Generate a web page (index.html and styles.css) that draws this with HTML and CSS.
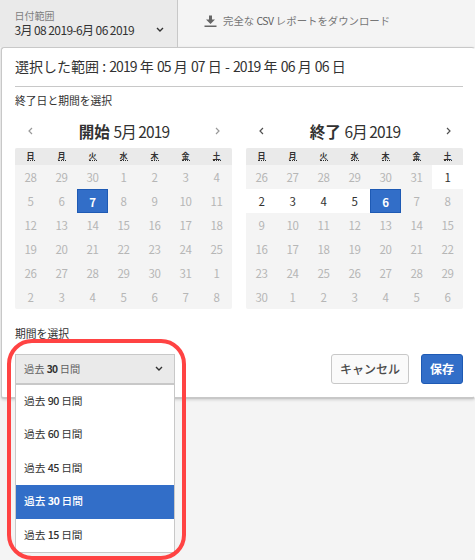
FILE: index.html
```html
<!DOCTYPE html>
<html lang="ja">
<head>
<meta charset="utf-8">
<title>日付範囲</title>
<link rel="stylesheet" href="styles.css">
</head>
<body>
<header class="toolbar">
  <div class="range-button">
    <div>
      <div class="range-label">日付範囲</div>
      <div class="range-value">3月 08 2019-6月 06 2019</div>
    </div>
    <svg class="chevron" width="8" height="6" viewBox="0 0 8 6"><path d="M1 1l3 3 3-3"/></svg>
  </div>
  <div class="download">
    <svg width="13" height="13" viewBox="0 0 13 13"><path d="M5 0.5h3v4h3L6.5 9 2 4.500h3zM0.500 10.500h12v1.500h-12z" fill="#666"/></svg>
    <span>完全な <span class="csv">CSV</span> レポートをダウンロード</span>
  </div>
</header>
<main class="panel">
  <h1>選択した範囲 : <span class="n">2019</span> 年 <span class="n">05</span> 月 <span class="n">07</span> 日 - <span class="n">2019</span> 年 <span class="n">06</span> 月 <span class="n">06</span> 日</h1>
  <p class="caption">終了日と期間を選択</p>
  <div class="calendars" id="calendars"></div>
  <p class="caption period-caption">期間を選択</p>
  <div class="controls">
    <div class="select">
      <div class="select-button"><span>過去 <b>30</b> 日間</span>
        <svg class="chevron" width="8" height="6" viewBox="0 0 8 6"><path d="M1 1l3 3 3-3"/></svg>
      </div>
      <ul class="options">
        <li>過去 <b>90</b> 日間</li>
        <li>過去 <b>60</b> 日間</li>
        <li>過去 <b>45</b> 日間</li>
        <li class="selected">過去 <b>30</b> 日間</li>
        <li>過去 <b>15</b> 日間</li>
      </ul>
      <div class="highlight"></div>
    </div>
    <div class="actions">
      <button class="cancel">キャンセル</button>
      <button class="save">保存</button>
    </div>
  </div>
</main>
<script src="calendar.js"></script>
</body>
</html>
```
FILE: styles.css
```css
* { box-sizing: border-box; }
body {
  margin: 0;
  width: 475px;
  height: 560px;
  overflow: hidden;
  background: #f4f4f4;
  color: #323232;
  font-family: "Noto Sans CJK JP", sans-serif;
  font-size: 11px;
  font-weight: 400;
}
.toolbar { display: flex; height: 47px; }
.range-button {
  display: flex;
  justify-content: space-between;
  width: 178px;
  padding: 9px 13px 0 14.500px;
  background: #eaeaea;
  border-right: 1px solid #c8c8c8;
  white-space: nowrap;
}
.range-button .chevron { margin-top: 18px; }
.range-label { font-size: 10px; line-height: 14px; color: #808080; }
.range-value { font-size: 12px; line-height: 14px; letter-spacing: -0.6px; }
.chevron { fill: none; stroke: #323232; stroke-width: 1.4; }
.download {
  display: flex;
  gap: 6px;
  padding: 14px 0 0 26px;
  font-size: 10.400px;
  line-height: 14px;
  color: #777;
  white-space: nowrap;
}
.download svg { margin-top: 1px; }
.csv { letter-spacing: -0.5px; color: #5c5c5c; }
.panel {
  width: 474px;
  height: 352px;
  margin-left: 1px;
  padding: 0 11px 0 13px;
  background: #fff;
  border: 1px solid #c8c8c8;
  border-right-color: #fff;
  border-bottom: 2px solid #c8c8c8;
  border-radius: 3px;
  box-shadow: 0 1px 3px rgba(0, 0, 0, .15);
}
h1 {
  height: 39px;
  margin: 0;
  border-bottom: 1px solid #c8c8c8;
  font-size: 14px;
  font-weight: 400;
  line-height: 36px;
  white-space: nowrap;
}
.n { letter-spacing: -0.9px; }
.caption { margin: 0; height: 30px; line-height: 27px; font-size: 10.800px; }
.calendars { display: flex; gap: 14px; }
.calendar { width: 217px; }
.month {
  display: flex;
  justify-content: space-between;
  align-items: center;
  height: 31px;
  padding: 0 11px 3px 12px;
}
.month svg { fill: none; stroke: #505050; stroke-width: 1.2; }
.start .month svg { stroke: #999; }
.month h2 { margin: 0; font-size: 15.500px; line-height: 24px; font-weight: 400; letter-spacing: -0.9px; }
.month strong { margin-right: 1px; letter-spacing: 0; }
.days {
  display: grid;
  grid-template-columns: repeat(7, 31px);
  grid-template-rows: 17px repeat(6, 24px);
  border-radius: 2px;
  overflow: hidden;
  background: #f4f4f4;
  text-align: center;
}
.weekday { background: #eaeaea; font-size: 8px; font-weight: 700; line-height: 15px; }
.weekday span { display: inline-block; height: 13px; border-bottom: 1px dotted #323232; }
.day { color: #b6b6b6; font-size: 11.500px; line-height: 25px; letter-spacing: -0.5px; }
.day.active { background: #fff; color: #323232; }
.day.chosen {
  background: #326ec8;
  border: 1px solid #1e5ab4;
  color: #fff;
  font-weight: 700;
  line-height: 24px;
}
.period-caption { height: 45px; line-height: 48px; }
.controls { display: flex; justify-content: space-between; align-items: flex-start; }
.select { position: relative; width: 160px; }
.select-button {
  display: flex;
  align-items: center;
  justify-content: space-between;
  height: 30px;
  padding: 0 11px 1px 8px;
  border: 1px solid #c8c8c8;
  background: #eaeaea;
  font-size: 10.200px;
  color: #606060;
}
.select-button b { color: #323232; }
b { letter-spacing: -0.6px; }
.options {
  position: absolute;
  top: 30px;
  left: 0;
  width: 160px;
  margin: 0;
  padding: 0;
  list-style: none;
  background: #fff;
  border: 1px solid #c8c8c8;
}
.options li { height: 33.400px; padding-left: 8px; font-size: 10.700px; line-height: 32px; }
.options b { font-weight: 500; }
.options .selected { background: #326ec8; color: #fff; font-weight: 500; }
.options .selected b { font-weight: 700; }
.highlight {
  position: absolute;
  top: -15px;
  left: -8px;
  width: 179px;
  height: 221px;
  border: 4px solid #ff4343;
  border-radius: 25px;
}
.actions { display: flex; gap: 12px; }
button {
  height: 30px;
  padding: 0;
  border-radius: 3px;
  font-family: inherit;
  font-size: 12px;
  font-weight: 500;
  line-height: 26px;
}
.cancel { width: 78px; border: 1px solid #c8c8c8; background: #fafafa; color: #4b4b4b; }
.save { width: 42px; border: 1px solid #1e5ab4; background: #326ec8; color: #fff; font-weight: 700; }
```
FILE: calendar.js
```javascript
const months = [
  { kind: 'start', title: '開始', month: '5月 2019', first: 28, prev: 30, length: 31, active: [], chosen: 9 },
  { kind: 'end', title: '終了', month: '6月 2019', first: 26, prev: 31, length: 30, active: [6, 7, 8, 9, 10], chosen: 11 }
];
const arrow = d => `<svg width="7" height="8" viewBox="0 0 7 8"><path d="${d}"/></svg>`;

document.getElementById('calendars').innerHTML = months.map(m => {
  const lead = m.prev - m.first + 1;
  let cells = [...'日月火水木金土'].map(w => `<div class="weekday"><span>${w}</span></div>`).join('');
  for (let i = 0; i < 42; i++) {
    const n = i < lead ? m.first + i : (i - lead) % m.length + 1;
    const state = i === m.chosen ? ' chosen' : m.active.includes(i) ? ' active' : '';
    cells += `<div class="day${state}">${n}</div>`;
  }
  return `<section class="calendar ${m.kind}">
    <div class="month">${arrow('M5 1L2 4l3 3')}<h2><strong>${m.title}</strong> ${m.month}</h2>${arrow('M2 1l3 3-3 3')}</div>
    <div class="days">${cells}</div>
  </section>`;
}).join('');
```
